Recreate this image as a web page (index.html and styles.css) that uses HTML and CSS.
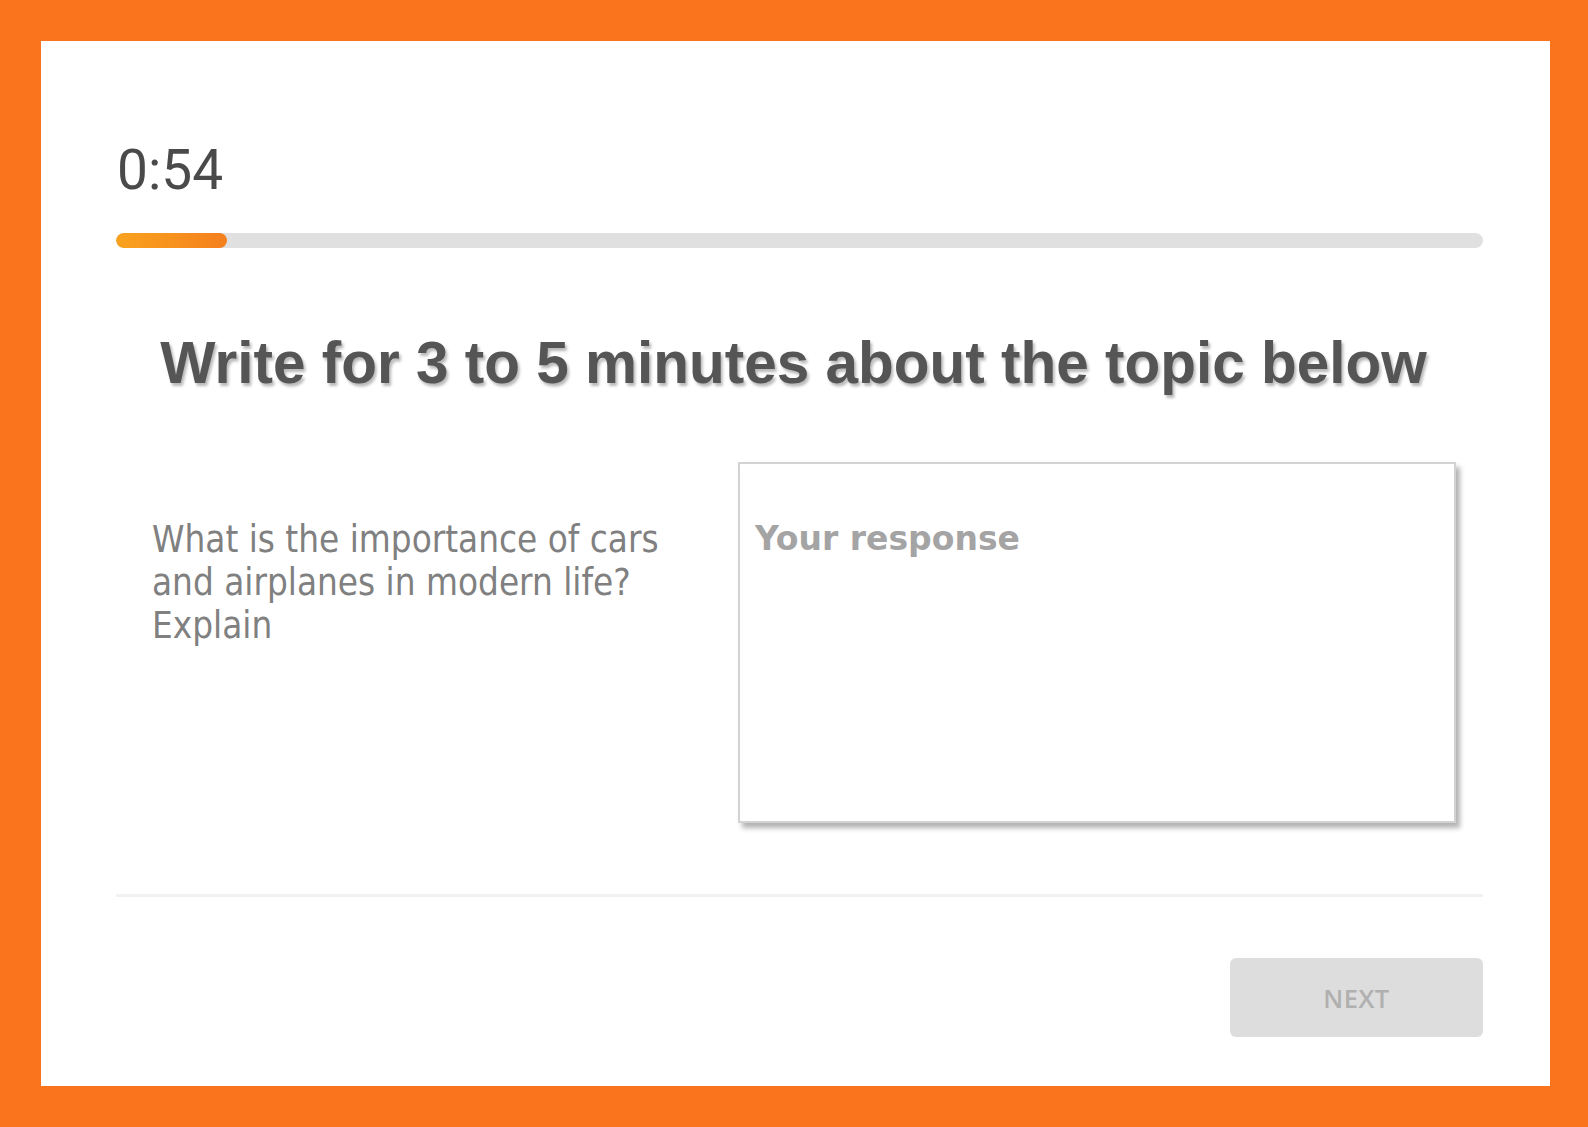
FILE: index.html
```html
<!DOCTYPE html>
<html lang="en">
<head>
<meta charset="utf-8">
<title>Writing task</title>
<link rel="stylesheet" href="styles.css">
</head>
<body>
<div class="frame">
  <main class="card">
    <div class="content">
      <div class="timer">0:54</div>
      <div class="progress"><div class="progress-fill" style="width: 111px"></div></div>
      <h1 class="title">Write for 3 to 5 minutes about the topic below</h1>
      <section class="task">
        <p class="question">What is the importance of cars and airplanes in modern life? Explain</p>
        <textarea class="response" placeholder="Your response"></textarea>
      </section>
      <hr class="divider">
      <div class="actions">
        <button class="next" type="button">NEXT</button>
      </div>
    </div>
  </main>
</div>
</body>
</html>
```

FILE: styles.css
```css
* { box-sizing: border-box; }

html, body {
  margin: 0;
  padding: 0;
}

body {
  background: #f9741c;
  font-family: "Liberation Sans", Arial, sans-serif;
}

.frame {
  width: 1588px;
  height: 1127px;
  padding: 41px 38px 41px 41px;
}

.card {
  background: #ffffff;
  width: 1509px;
  height: 1045px;
  padding: 102px 67px 0 75px;
}

.content {
  display: flex;
  flex-direction: column;
}

.timer {
  font-family: Roboto, "Open Sans", sans-serif;
  font-size: 55px;
  line-height: 55px;
  height: 55px;
  color: #4a4a4a;
  margin-left: 1px;
}

.progress {
  margin-top: 35px;
  height: 15px;
  border-radius: 8px;
  background: #e0e0e0;
  overflow: hidden;
}

.progress-fill {
  height: 100%;
  border-radius: 8px;
  background: linear-gradient(90deg, #f9a21f 0%, #f7921d 50%, #f47f1e 100%);
}

.title {
  margin: 82px 12px 0 0;
  font-family: "Liberation Sans", Arial, sans-serif;
  font-weight: bold;
  font-size: 58.5px;
  line-height: 66px;
  height: 66px;
  color: #555555;
  text-align: center;
  text-shadow: 2px 3px 3px rgba(0, 0, 0, 0.28);
}

.task {
  margin-top: 66px;
  display: flex;
  align-items: flex-start;
}

.question {
  flex: 1;
  margin: 56px 0 0 0;
  padding: 0 60px 0 36px;
  font-family: "DejaVu Sans Condensed", "DejaVu Sans", sans-serif;
  font-size: 36.5px;
  line-height: 43px;
  color: #808080;
}

.response {
  flex: none;
  width: 718px;
  height: 361px;
  margin: 0 27px 0 0;
  padding: 55px 16px 16px 15px;
  border: 2px solid #d3d3d3;
  border-radius: 0;
  box-shadow: 4px 5px 5px rgba(0, 0, 0, 0.3);
  resize: none;
  outline: none;
  background: #ffffff;
  font-family: "DejaVu Sans", sans-serif;
  font-weight: bold;
  font-size: 33px;
  line-height: 40px;
  color: #555555;
}

.response::placeholder {
  color: #a4a4a4;
  opacity: 1;
}

.divider {
  margin: 71px 0 0 0;
  border: 0;
  height: 3px;
  background: #f2f2f2;
}

.actions {
  margin-top: 61px;
  display: flex;
  justify-content: flex-end;
}

.next {
  width: 253px;
  height: 79px;
  border: 0;
  border-radius: 6px;
  background: #dddddd;
  font-family: "Open Sans", sans-serif;
  font-weight: 600;
  font-size: 25.5px;
  letter-spacing: 0.5px;
  color: #b0b0b0;
  padding: 0;
  cursor: default;
}
```
